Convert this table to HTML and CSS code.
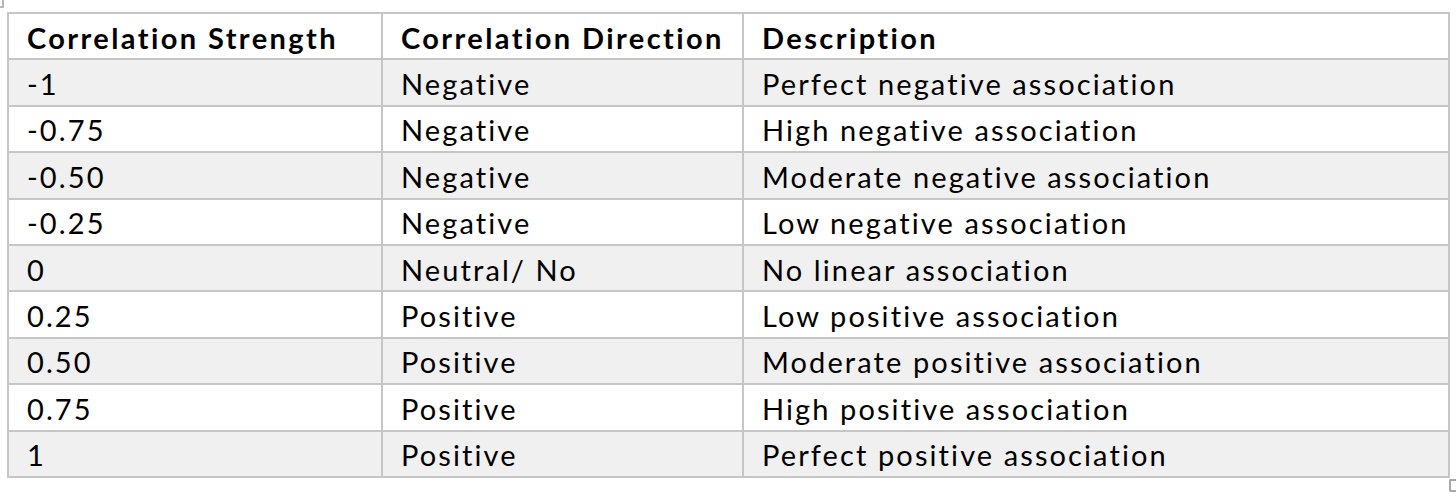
FILE: index.html
```html
<!DOCTYPE html>
<html>
<head>
<meta charset="utf-8">
<link rel="stylesheet" href="styles.css">
</head>
<body>
<div class="page">
  <span class="handle-tl"></span>
  <table class="corr">
    <colgroup>
      <col class="c1"><col class="c2"><col class="c3">
    </colgroup>
    <thead>
      <tr><th>Correlation Strength</th><th>Correlation Direction</th><th>Description</th></tr>
    </thead>
    <tbody>
      <tr class="shade"><td>-1</td><td>Negative</td><td>Perfect negative association</td></tr>
      <tr><td>-0.75</td><td>Negative</td><td>High negative association</td></tr>
      <tr class="shade"><td>-0.50</td><td>Negative</td><td>Moderate negative association</td></tr>
      <tr><td>-0.25</td><td>Negative</td><td>Low negative association</td></tr>
      <tr class="shade"><td>0</td><td>Neutral/ No</td><td>No linear association</td></tr>
      <tr><td>0.25</td><td>Positive</td><td>Low positive association</td></tr>
      <tr class="shade"><td>0.50</td><td>Positive</td><td>Moderate positive association</td></tr>
      <tr><td>0.75</td><td>Positive</td><td>High positive association</td></tr>
      <tr class="shade"><td>1</td><td>Positive</td><td>Perfect positive association</td></tr>
    </tbody>
  </table>
  <span class="handle-br"></span>
</div>
</body>
</html>
```
FILE: styles.css
```css
html, body {
  margin: 0;
  background: #ffffff;
}
.page {
  position: relative;
  width: 1456px;
  height: 497px;
  padding: 12px 0 0 7px;
  box-sizing: border-box;
  font-family: Lato, "Open Sans", sans-serif;
  font-variant-ligatures: none;
  color: #000;
}
.corr {
  border-collapse: collapse;
  width: 1441px;
  table-layout: fixed;
}
.c1 { width: 374px; }
.c2 { width: 361px; }
.c3 { width: 706px; }
.corr th, .corr td {
  border: 2px solid #c6c6c6;
  padding: 3px 0 0 18px;
  text-align: left;
  font-size: 29px;
  letter-spacing: 2.1px;
  line-height: 36px;
  height: 42px;
  box-sizing: border-box;
  white-space: nowrap;
}
.corr th {
  font-weight: 700;
  letter-spacing: 2.4px;
}
.corr td {
  font-weight: 400;
}
.corr tr {
  height: 46.4px;
}
.shade td {
  background: #f0f0f0;
}
.handle-tl {
  position: absolute;
  left: -4px;
  top: -4px;
  width: 6px;
  height: 10px;
  border-right: 2px solid #b8b8b8;
  border-bottom: 2px solid #b8b8b8;
}
.handle-br {
  position: absolute;
  left: 1449px;
  top: 479px;
  width: 7px;
  height: 9px;
  border: 2px solid #a8a8a8;
  border-right: none;
  border-radius: 2px 0 0 2px;
}
```
